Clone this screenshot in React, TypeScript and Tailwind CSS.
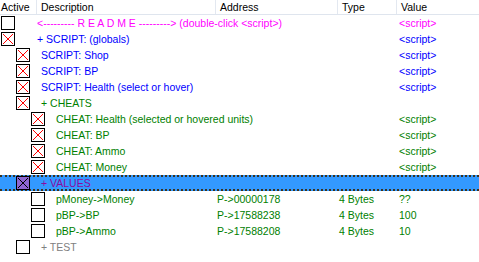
type Row = {
  level: 0 | 1 | 2;
  box: "empty" | "checked" | "selected";
  text: string;
  color: string;
  address?: string;
  type?: string;
  value?: string;
  selected?: boolean;
};

const rows: Row[] = [
  { level: 0, box: "empty", text: "<--------- R E A D M E ---------> (double-click <script>)", color: "text-[#ff00ff]", value: "<script>" },
  { level: 0, box: "checked", text: "+ SCRIPT: (globals)", color: "text-[#0000ff]", value: "<script>" },
  { level: 1, box: "checked", text: "SCRIPT: Shop", color: "text-[#0000ff]", value: "<script>" },
  { level: 1, box: "checked", text: "SCRIPT: BP", color: "text-[#0000ff]", value: "<script>" },
  { level: 1, box: "checked", text: "SCRIPT: Health (select or hover)", color: "text-[#0000ff]", value: "<script>" },
  { level: 1, box: "checked", text: "+ CHEATS", color: "text-[#008000]" },
  { level: 2, box: "checked", text: "CHEAT: Health (selected or hovered units)", color: "text-[#008000]", value: "<script>" },
  { level: 2, box: "checked", text: "CHEAT: BP", color: "text-[#008000]", value: "<script>" },
  { level: 2, box: "checked", text: "CHEAT: Ammo", color: "text-[#008000]", value: "<script>" },
  { level: 2, box: "checked", text: "CHEAT: Money", color: "text-[#008000]", value: "<script>" },
  { level: 1, box: "selected", text: "+ VALUES", color: "text-[#8a0aa0]", selected: true },
  { level: 2, box: "empty", text: "pMoney->Money", color: "text-[#008000]", address: "P->00000178", type: "4 Bytes", value: "??" },
  { level: 2, box: "empty", text: "pBP->BP", color: "text-[#008000]", address: "P->17588238", type: "4 Bytes", value: "100" },
  { level: 2, box: "empty", text: "pBP->Ammo", color: "text-[#008000]", address: "P->17588208", type: "4 Bytes", value: "10" },
  { level: 1, box: "empty", text: "+ TEST", color: "text-[#808080]" },
];

const indent = ["pl-px", "pl-[16px]", "pl-[31px]"];
const textGap = ["ml-[22px]", "ml-[11px]", "ml-[11px]"];

function CheckBox({ kind }: { kind: Row["box"] }) {
  const fill = kind === "selected" ? "#8e66d0" : "#ffffff";
  const cross = kind === "selected" ? "#000000" : "#ff0000";
  return (
    <svg width="14" height="14" viewBox="0 0 14 14" className="shrink-0">
      <rect x="0.5" y="0.5" width="13" height="13" fill={fill} stroke="#000" />
      {kind !== "empty" && (
        <>
          <line x1="2" y1="2" x2="12" y2="12" stroke={cross} strokeWidth="1" />
          <line x1="12" y1="2" x2="2" y2="12" stroke={cross} strokeWidth="1" />
        </>
      )}
    </svg>
  );
}

export default function App() {
  return (
    <div className="w-[479px] h-[262px] bg-white overflow-hidden font-['Liberation_Sans',Arial,sans-serif] text-[10.5px] select-none">
      {/* Header */}
      <div className="flex h-[15px] leading-[14px] border-b border-[#dfe5ee] text-black">
        <div className="w-[37px] pl-px border-r border-[#e3e8f0]">Active</div>
        <div className="w-[179px] pl-[4px] border-r border-[#e3e8f0]">Description</div>
        <div className="w-[122px] pl-[4px] border-r border-[#e3e8f0]">Address</div>
        <div className="w-[59px] pl-[4px] border-r border-[#e3e8f0]">Type</div>
        <div className="flex-1 pl-[4px]">Value</div>
      </div>

      {/* Rows */}
      {rows.map((r, i) => (
        <div
          key={i}
          className={
            r.selected
              ? "flex h-[16px] leading-[12px] items-center bg-[#3399ff] border-y-2 border-dotted border-[#3a3320]"
              : "flex h-[16px] leading-[16px] items-center"
          }
        >
          <div className={`w-[216px] flex items-center whitespace-nowrap ${indent[r.level]}`}>
            <CheckBox kind={r.box} />
            <span className={`${textGap[r.level]} ${r.color}`}>{r.text}</span>
          </div>
          <div className={`w-[122px] pl-px whitespace-nowrap ${r.color}`}>{r.address}</div>
          <div className={`w-[59px] pl-px whitespace-nowrap ${r.color}`}>{r.type}</div>
          <div className={`flex-1 pl-[2px] whitespace-nowrap ${r.color}`}>{r.value}</div>
        </div>
      ))}
    </div>
  );
}
